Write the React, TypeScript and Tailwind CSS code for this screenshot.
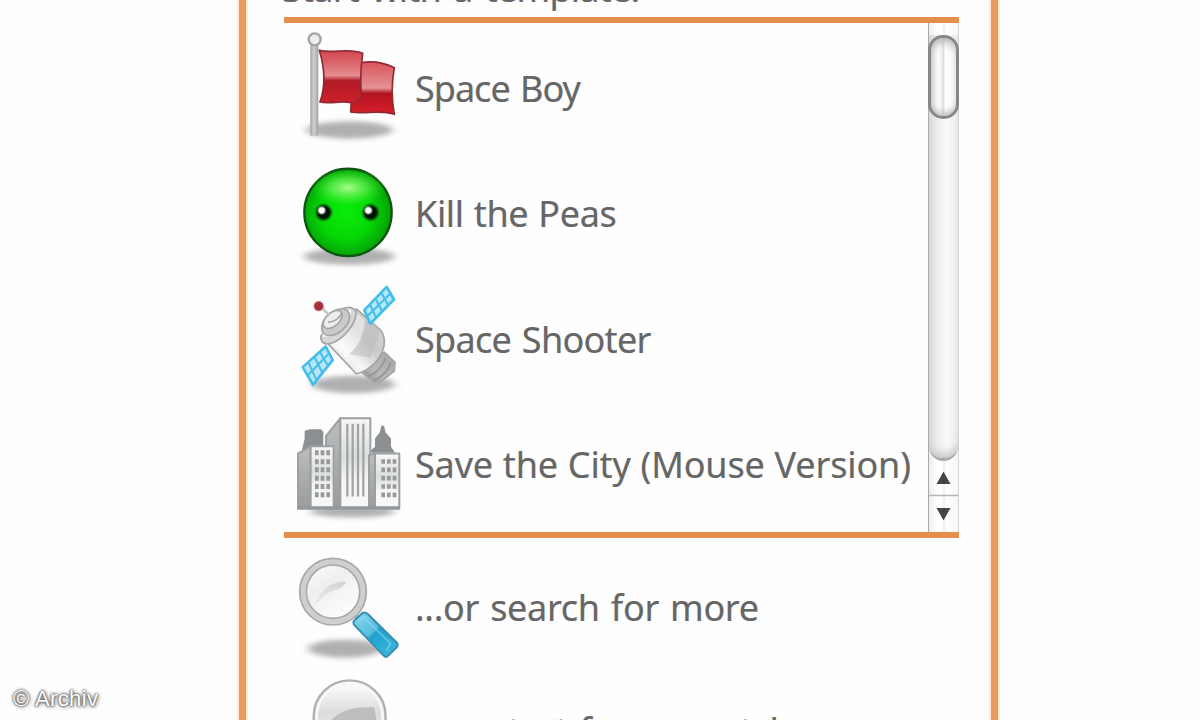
import type { ReactNode } from 'react';

function Label({ children, className }: { children: ReactNode; className: string }) {
  return (
    <span
      className={`block whitespace-nowrap font-['Noto_Sans','Open_Sans',sans-serif] text-[36px] leading-[40px] text-[#666666] [-webkit-text-stroke:0.2px_#666666] ${className}`}
    >
      {children}
    </span>
  );
}

function Row({ icon, children, spacing }: { icon: ReactNode; children: ReactNode; spacing: string }) {
  return (
    <div className="flex h-[125.6px] shrink-0 items-start pl-[6px]">
      {icon}
      <Label className={`pl-[5px] ${spacing}`}>{children}</Label>
    </div>
  );
}

const iconSize = 'h-[125.6px] w-[120px] shrink-0';

function Shadow({ id, cx, cy, rx, ry }: { id: string; cx: number; cy: number; rx: number; ry: number }) {
  return (
    <>
      <filter id={id} x="-20%" y="-80%" width="140%" height="260%">
        <feGaussianBlur stdDeviation="12 8" />
      </filter>
      <ellipse cx={cx} cy={cy} rx={rx} ry={ry} fill="#b0b0b2" filter={`url(#${id})`} />
    </>
  );
}

function FlagIcon() {
  return (
    <svg className={iconSize} viewBox="0 6 360 376.8">
      <defs>
        <linearGradient id="flagA" x1="0" y1="0" x2="0" y2="1">
          <stop offset="0" stopColor="#d4434d" />
          <stop offset=".48" stopColor="#e48b8f" />
          <stop offset=".58" stopColor="#b01a25" />
          <stop offset="1" stopColor="#cc202c" />
        </linearGradient>
        <linearGradient id="flagB" x1="0" y1="0" x2="0" y2="1">
          <stop offset="0" stopColor="#d9545b" />
          <stop offset=".5" stopColor="#e59295" />
          <stop offset=".6" stopColor="#b0141e" />
          <stop offset="1" stopColor="#da1f2c" />
        </linearGradient>
        <linearGradient id="pole" x1="0" x2="1">
          <stop offset="0" stopColor="#a3a3a3" />
          <stop offset=".45" stopColor="#cfd2d2" />
          <stop offset="1" stopColor="#a0a0a0" />
        </linearGradient>
      </defs>
      <Shadow id="flagShadow" cx={178} cy={330} rx={130} ry={26} />
      <path d="M61 76h24v271H61z" fill="url(#pole)" />
      <circle cx="74" cy="58" r="18" fill="#ededed" stroke="#a3a3a3" strokeWidth="7" />
      <path
        d="M214 128c34-6 66-1 99 15-8 43-10 87 0 140-43-16-86 1-131-7l2-29z"
        fill="url(#flagB)"
        stroke="#8f2935"
        strokeWidth="5"
      />
      <path
        d="M88 91c44 11 90-9 130 9-6 47-8 92-3 128-7 15-19 22-34 20-30-8-59 6-91-2 17-47 13-105-2-155z"
        fill="url(#flagA)"
        stroke="#8f2935"
        strokeWidth="5"
      />
    </svg>
  );
}

function PeaIcon() {
  return (
    <svg className={iconSize} viewBox="0 -7.2 360 376.8">
      <defs>
        <radialGradient id="pea" cx=".48" cy=".5" r=".55">
          <stop offset="0" stopColor="#08ee08" />
          <stop offset=".55" stopColor="#06d606" />
          <stop offset="1" stopColor="#049806" />
        </radialGradient>
        <radialGradient id="peaShine">
          <stop offset="0" stopColor="#b8ff9c" stopOpacity=".9" />
          <stop offset=".5" stopColor="#7cfa66" stopOpacity=".55" />
          <stop offset="1" stopColor="#3df52d" stopOpacity="0" />
        </radialGradient>
        <radialGradient id="eye">
          <stop offset=".6" stopColor="#041404" />
          <stop offset="1" stopColor="#0a4a0a" stopOpacity="0" />
        </radialGradient>
        <radialGradient id="glint">
          <stop offset=".5" stopColor="#fff" />
          <stop offset="1" stopColor="#999" stopOpacity="0" />
        </radialGradient>
      </defs>
      <Shadow id="peaShadow" cx={178} cy={318} rx={136} ry={25} />
      <circle cx="174" cy="186" r="131" fill="url(#pea)" stroke="#0d5510" strokeWidth="7" />
      <ellipse cx="174" cy="112" rx="112" ry="56" fill="url(#peaShine)" />
      <circle cx="101" cy="186" r="29" fill="url(#eye)" />
      <circle cx="242" cy="186" r="29" fill="url(#eye)" />
      <circle cx="95" cy="180" r="15" fill="url(#glint)" />
      <circle cx="235" cy="180" r="15" fill="url(#glint)" />
    </svg>
  );
}

function SatelliteIcon() {
  return (
    <svg className={iconSize} viewBox="0 -7.4 360 376.8">
      <defs>
        <linearGradient id="satBody" x1="0" y1="1" x2="1" y2="0">
          <stop offset="0" stopColor="#d5d5d5" />
          <stop offset=".35" stopColor="#f6f6f6" />
          <stop offset=".6" stopColor="#c9caca" />
          <stop offset="1" stopColor="#dadada" />
        </linearGradient>
        <linearGradient id="satTail" x1="0" y1="1" x2="1" y2="0">
          <stop offset="0" stopColor="#8c8c8c" />
          <stop offset=".4" stopColor="#b9b9b9" />
          <stop offset="1" stopColor="#a4a4a4" />
        </linearGradient>
      </defs>
      <Shadow id="satShadow" cx={190} cy={327} rx={125} ry={26} />
      <g stroke="#a5a5a5" strokeWidth="5" strokeLinejoin="round">
        <path d="M215 290l68-60 32 31-2 26-43 33-21-1z" fill="url(#satTail)" />
        <path d="M234 302c23-7 45-29 52-54M250 316c25-10 44-28 53-56" fill="none" stroke="#959595" />
        <path d="M112 203l87-103 73 64c13 18 14 42 5 65-15 33-46 60-78 66z" fill="url(#satBody)" />
        <path d="M136 183l61-73 26 24c-2 48-21 85-54 113l-43-39z" fill="#fff" fillOpacity=".42" stroke="none" />
        <path d="M177 236l64 11 33-83-49-43c9 43-9 81-48 115z" fill="#b7baba" fillOpacity=".5" stroke="none" />
        <path d="M95 196c-8-15 3-24 18-26l43-70c18-7 34-5 42 8 3 28-26 70-62 91-18 9-36 8-41-3z" fill="#d5d6d6" />
        <path d="M98 178c33 9 80-36 82-76" fill="none" stroke="#f6f6f6" strokeWidth="9" />
        <ellipse cx="137" cy="140" rx="49" ry="31" transform="rotate(-42 137 140)" fill="#c9cbcb" />
        <ellipse cx="128" cy="132" rx="34" ry="20" transform="rotate(-42 128 132)" fill="#ededed" />
        <path d="M94 96l25 24" stroke="#c6c3c3" strokeWidth="7" />
      </g>
      <path d="M114 140c19 1 36-14 42-28" fill="none" stroke="#a5a5a5" strokeWidth="5" />
      <circle cx="86" cy="92" r="14" fill="#a62f3b" stroke="#bf7379" strokeWidth="3" />
      <g fill="#b5e8fa" stroke="#45bdeb" strokeWidth="8" strokeLinejoin="round">
        <path d="M223 104l67-70 22 38-71 73z" />
        <path d="M38 275l69-62 21 41-59 74z" />
      </g>
      <g fill="none" stroke="#45bdeb" strokeWidth="6">
        <path d="M231 123l70-69M240 88l19 40M257 70l20 39M274 52l21 38" />
        <path d="M52 301l66-68M55 260l24 53M73 244l24 48M90 229l24 43" />
      </g>
    </svg>
  );
}

function CityIcon() {
  return (
    <svg className={iconSize} viewBox="0 -3.6 360 376.8">
      <defs>
        <linearGradient id="side" x1="0" y1="0" x2="0" y2="1">
          <stop offset="0" stopColor="#bbbdbd" />
          <stop offset="1" stopColor="#999c9e" />
        </linearGradient>
        <linearGradient id="front" x1="0" y1="0" x2="0" y2="1">
          <stop offset="0" stopColor="#f7f7f7" />
          <stop offset=".43" stopColor="#dcdddd" />
          <stop offset=".7" stopColor="#f7f7f7" />
        </linearGradient>
      </defs>
      <Shadow id="cityShadow" cx={187} cy={334} rx={128} ry={18} />
      <path d="M35 154l9-39V92l15-5h34l7 8v46zM235 158l20-18v-25l14-18 5-20h8l5 20 16 18v25l12 18z" fill="#8d9092" />
      <g stroke="#9da0a2" strokeWidth="6" strokeLinejoin="round">
        <path d="M108 108l43-54v271h-43z" fill="url(#side)" />
        <path d="M151 54h90v271h-90z" fill="url(#front)" />
        <path d="M24 160l38-22v187H24z" fill="url(#side)" />
        <path d="M62 138h69v187H62z" fill="url(#front)" />
        <path d="M237 165l18-5v165h-18z" fill="url(#side)" />
        <path d="M255 160h73v165h-73z" fill="url(#front)" />
      </g>
      <path d="M172 71v218M188 71v218M204 71v218M220 71v218" stroke="#a2a5a7" strokeWidth="7" />
      {[158, 185, 209, 234, 259, 284].map((y) => (
        <path key={y} d={`M75 ${y}h11m6 0h11m6 0h11`} stroke="#979a9c" strokeWidth="15" />
      ))}
      {[184, 209, 234, 259, 284].map((y) => (
        <path key={y} d={`M274 ${y}h11m6 0h11m6 0h11`} stroke="#979a9c" strokeWidth="14" />
      ))}
      <path d="M22 323h308" stroke="#92979b" strokeWidth="10" />
    </svg>
  );
}

function SearchIcon() {
  return (
    <svg className={iconSize} viewBox="30 6 360 376.8">
      <defs>
        <linearGradient id="lens" x1="0" y1="0" x2=".65" y2="1">
          <stop offset="0" stopColor="#fff" />
          <stop offset=".45" stopColor="#eee" />
          <stop offset="1" stopColor="#fff" />
        </linearGradient>
        <linearGradient id="lensGlare" x1="1" y1="0" x2="0" y2="1">
          <stop offset="0" stopColor="#d2d2d2" />
          <stop offset="1" stopColor="#ededed" />
        </linearGradient>
        <linearGradient id="handle" x1="0" y1="0" x2="1" y2="1">
          <stop offset="0" stopColor="#8cdaf0" />
          <stop offset=".43" stopColor="#55bddd" />
          <stop offset=".48" stopColor="#20a0ce" />
          <stop offset="1" stopColor="#40bdde" />
        </linearGradient>
      </defs>
      <Shadow id="searchShadow" cx={196} cy={326} rx={112} ry={27} />
      <path d="M220 218l12 14" stroke="#a9c3cc" strokeWidth="15" />
      <circle cx="159" cy="155" r="90" fill="url(#lens)" stroke="#a9a9a9" strokeWidth="25" />
      <circle cx="159" cy="155" r="90" fill="none" stroke="#cfcfcf" strokeWidth="15" />
      <path d="M101 205c13-51 48-82 98-80-14 22-27 22-43 28-24 9-39 27-55 52z" fill="url(#lensGlare)" />
      <path
        d="M225 239l22-20c6-3 12-1 17 4l87 86c3 5 3 9-1 13l-25 25c-4 4-10 4-14 0l-87-91c-5-6-5-12 1-17z"
        fill="url(#handle)"
        stroke="#368fb1"
        strokeWidth="6"
      />
      <path d="M237 244l13-13 82 80-13 20" fill="none" stroke="#9ee5f5" strokeWidth="5" opacity=".45" />
    </svg>
  );
}

function BlankIcon() {
  return (
    <svg className={iconSize} viewBox="30 376.8 360 376.8">
      <defs>
        <linearGradient id="globe" x1="0" y1="0" x2="0" y2="1">
          <stop offset="0" stopColor="#fff" />
          <stop offset=".45" stopColor="#dcdcdc" />
          <stop offset="1" stopColor="#f5f5f5" />
        </linearGradient>
      </defs>
      <circle cx="209" cy="528" r="108" fill="url(#globe)" stroke="#b0b0b0" strokeWidth="7" />
      <path d="M145 550c28-39 77-53 138-49l8 49z" fill="#bdbdbd" />
      <circle cx="209" cy="528" r="99" fill="none" stroke="#f8f8f8" strokeWidth="8" />
    </svg>
  );
}

function ScrollBar() {
  return (
    <div className="flex h-[509px] w-[31px] flex-col border-x border-[#d5d5d5] border-l-[#aaaaaa] bg-[linear-gradient(90deg,#ededed,#fff_28%,#fff_45%,#ededed_52%,#fff_60%,#f6f6f6)]">
      <div className="h-[12px] shrink-0" />
      <div className="h-[426px] w-[29px] shrink-0 rounded-b-[15px] border-b-[3px] border-[#a9a9a9] bg-[linear-gradient(90deg,#d9d9d9,#ededed_28%,#fafafa_65%,#e8e8e8)] shadow-[inset_0_-10px_9px_-5px_#c8c8c8]">
        <div className="-ml-px h-[84px] w-[31px] rounded-[15px] border-[3px] border-[#85878a] bg-[linear-gradient(90deg,#d9d9d9,#fbfbfb_28%,#f2f2f2_43%,#dadada_49%,#fff_57%,#f5f5f5)] shadow-[inset_0_8px_8px_-4px_#b4b4b4,inset_0_-7px_7px_-4px_#bbb]" />
      </div>
      <svg className="h-[71px] w-[29px] shrink-0" viewBox="0 0 29 71">
        <path d="M14.5 10.500l7 12.500h-14z" fill="#454545" />
        <path d="M0 34.500h29" stroke="#b5b5b5" strokeWidth="1.5" />
        <path d="M14.500 59.500l7-12.500h-14z" fill="#454545" />
      </svg>
    </div>
  );
}

export default function App() {
  return (
    <main className="relative h-[720px] w-[1200px] overflow-hidden bg-[#fefefe]">
      <section className="ml-[239px] h-[720px] w-[759px] border-x-[7px] border-[#e99a5e] px-[38px] shadow-[-2px_0_1px_#fdebd0,2px_0_1px_#fdebd0,inset_2px_0_1px_#fdebd0,inset_-2px_0_1px_#fdebd0]">
        <header className="flex h-[17px] items-end">
          <Label className="mb-[8px] -ml-[2px] tracking-[-0.75px] [word-spacing:3.5px]">Start with a template:</Label>
        </header>
        <div className="flex h-[521px] w-[675px] border-y-[6px] border-[#e68e4c]">
          <div className="-mt-px flex h-[510px] w-[644px] flex-col overflow-hidden">
            <Row icon={<FlagIcon />} spacing="pt-[47px] tracking-[-1px] [word-spacing:2px]">Space Boy</Row>
            <Row icon={<PeaIcon />} spacing="pt-[46px] tracking-[-0.35px] [word-spacing:1px]">Kill the Peas</Row>
            <Row icon={<SatelliteIcon />} spacing="pt-[47px] tracking-[-0.7px] [word-spacing:2px]">Space Shooter</Row>
            <Row icon={<CityIcon />} spacing="pt-[46px] tracking-[-0.15px] [word-spacing:0.7px]">Save the City (Mouse Version)</Row>
          </div>
          <ScrollBar />
        </div>
        <div className="flex h-[182px] flex-col overflow-hidden pt-[4px]">
          <Row icon={<SearchIcon />} spacing="pt-[46px] tracking-[-0.3px] [word-spacing:2px]">...or search for more</Row>
          <div className="-mt-[2px]">
            <Row icon={<BlankIcon />} spacing="pt-[45px] tracking-[-0.2px] [word-spacing:2px]">...or start from scratch</Row>
          </div>
        </div>
      </section>
      <span className="absolute top-[686px] left-[13px] font-['Liberation_Sans',sans-serif] text-[22px] leading-[25px] tracking-[0.4px] whitespace-nowrap text-white [text-shadow:0_0_2px_#444,0_0_3px_#555,1px_1px_4px_#777]">
        © Archiv
      </span>
    </main>
  );
}
